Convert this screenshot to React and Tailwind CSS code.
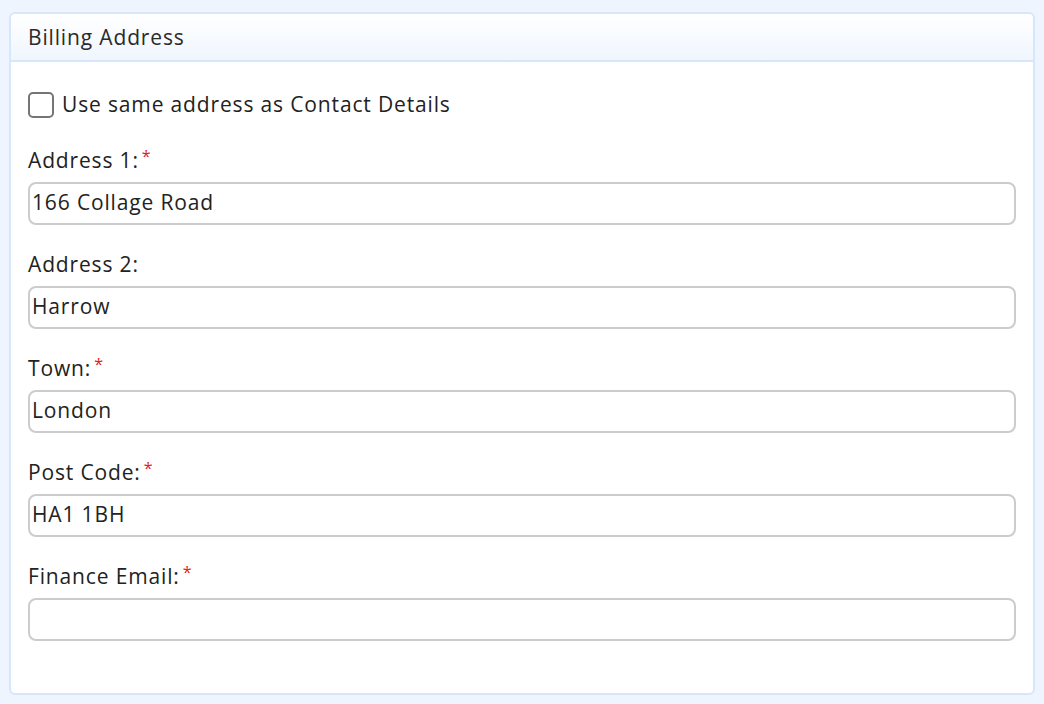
import React from "react";

const fields = [
  { label: "Address 1:", value: "166 Collage Road", required: true },
  { label: "Address 2:", value: "Harrow", required: false },
  { label: "Town:", value: "London", required: true },
  { label: "Post Code:", value: "HA1 1BH", required: true },
  { label: "Finance Email:", value: "", required: true },
];

export default function App() {
  return (
    <div
      className="min-h-[704px] bg-[#eef5fe] px-[9px] pt-[12px] pb-[10px] text-[21px] tracking-[0.85px] text-[#222]"
      style={{ fontFamily: "'Open Sans', 'Liberation Sans', sans-serif" }}
    >
      <div className="rounded-[6px] border-2 border-[#d7e7fb] bg-white">
        <div className="flex h-[48px] items-center rounded-t-[5px] border-b-2 border-[#d7e7fb] bg-gradient-to-b from-white to-[#f0f6fe] px-[17px]">
          <h2 className="pt-[2px] text-[#2a2a2a]">Billing Address</h2>
        </div>

        <div className="px-[17px] pt-[27px] pb-[52px]">
          <label className="flex items-center gap-[8px]">
            <span className="h-[26px] w-[26px] rounded-[5px] border-2 border-[#757575] bg-white" />
            <span>Use same address as Contact Details</span>
          </label>

          <div className="mt-[25px] flex flex-col gap-[25px]">
            {fields.map((f) => (
              <div key={f.label}>
                <div className="flex h-[30px] items-center">
                  {f.label}
                  {f.required && (
                    <span className="ml-[3px] -mt-[10px] text-[16px] text-[#e02020]">*</span>
                  )}
                </div>
                <div className="mt-[6px] flex h-[43px] items-center rounded-[8px] border-2 border-[#cccccc] px-[2px]">
                  {f.value}
                </div>
              </div>
            ))}
          </div>
        </div>
      </div>
    </div>
  );
}
